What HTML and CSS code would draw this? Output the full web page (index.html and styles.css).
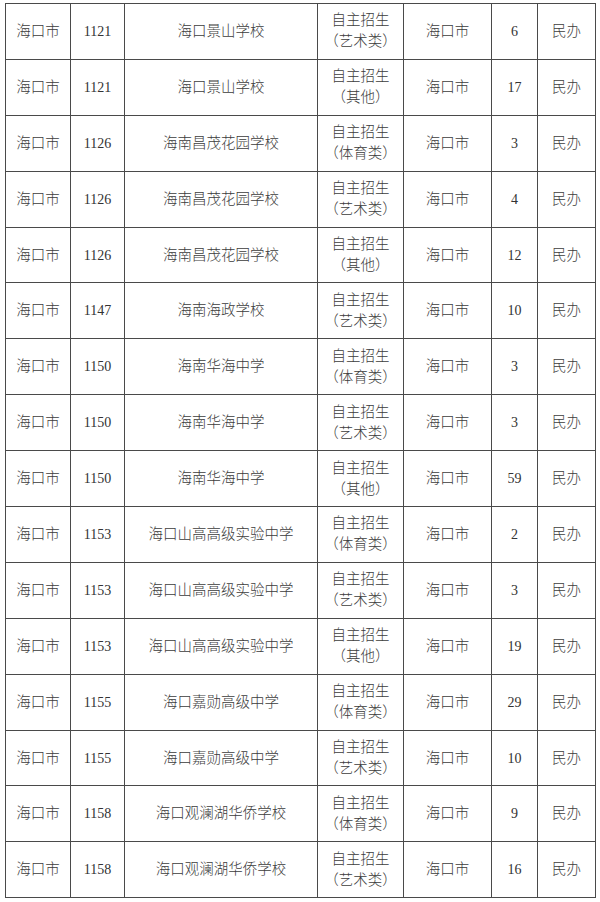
FILE: index.html
```html
<!DOCTYPE html>
<html lang="zh-CN">
<head>
<meta charset="utf-8">
<title>表格</title>
<link rel="stylesheet" href="styles.css">
</head>
<body>
<table class="tbl">
<colgroup>
<col class="c1"><col class="c2"><col class="c3"><col class="c4"><col class="c5"><col class="c6"><col class="c7">
</colgroup>
<tbody>
<tr><td>海口市</td><td class="num">1121</td><td>海口景山学校</td><td class="two">自主招生<br>（艺术类）</td><td>海口市</td><td class="num">6</td><td>民办</td></tr>
<tr><td>海口市</td><td class="num">1121</td><td>海口景山学校</td><td class="two">自主招生<br>（其他）</td><td>海口市</td><td class="num">17</td><td>民办</td></tr>
<tr><td>海口市</td><td class="num">1126</td><td>海南昌茂花园学校</td><td class="two">自主招生<br>（体育类）</td><td>海口市</td><td class="num">3</td><td>民办</td></tr>
<tr><td>海口市</td><td class="num">1126</td><td>海南昌茂花园学校</td><td class="two">自主招生<br>（艺术类）</td><td>海口市</td><td class="num">4</td><td>民办</td></tr>
<tr><td>海口市</td><td class="num">1126</td><td>海南昌茂花园学校</td><td class="two">自主招生<br>（其他）</td><td>海口市</td><td class="num">12</td><td>民办</td></tr>
<tr><td>海口市</td><td class="num">1147</td><td>海南海政学校</td><td class="two">自主招生<br>（艺术类）</td><td>海口市</td><td class="num">10</td><td>民办</td></tr>
<tr><td>海口市</td><td class="num">1150</td><td>海南华海中学</td><td class="two">自主招生<br>（体育类）</td><td>海口市</td><td class="num">3</td><td>民办</td></tr>
<tr><td>海口市</td><td class="num">1150</td><td>海南华海中学</td><td class="two">自主招生<br>（艺术类）</td><td>海口市</td><td class="num">3</td><td>民办</td></tr>
<tr><td>海口市</td><td class="num">1150</td><td>海南华海中学</td><td class="two">自主招生<br>（其他）</td><td>海口市</td><td class="num">59</td><td>民办</td></tr>
<tr><td>海口市</td><td class="num">1153</td><td>海口山高高级实验中学</td><td class="two">自主招生<br>（体育类）</td><td>海口市</td><td class="num">2</td><td>民办</td></tr>
<tr><td>海口市</td><td class="num">1153</td><td>海口山高高级实验中学</td><td class="two">自主招生<br>（艺术类）</td><td>海口市</td><td class="num">3</td><td>民办</td></tr>
<tr><td>海口市</td><td class="num">1153</td><td>海口山高高级实验中学</td><td class="two">自主招生<br>（其他）</td><td>海口市</td><td class="num">19</td><td>民办</td></tr>
<tr><td>海口市</td><td class="num">1155</td><td>海口嘉勋高级中学</td><td class="two">自主招生<br>（体育类）</td><td>海口市</td><td class="num">29</td><td>民办</td></tr>
<tr><td>海口市</td><td class="num">1155</td><td>海口嘉勋高级中学</td><td class="two">自主招生<br>（艺术类）</td><td>海口市</td><td class="num">10</td><td>民办</td></tr>
<tr><td>海口市</td><td class="num">1158</td><td>海口观澜湖华侨学校</td><td class="two">自主招生<br>（体育类）</td><td>海口市</td><td class="num">9</td><td>民办</td></tr>
<tr><td>海口市</td><td class="num">1158</td><td>海口观澜湖华侨学校</td><td class="two">自主招生<br>（艺术类）</td><td>海口市</td><td class="num">16</td><td>民办</td></tr>
</tbody>
</table>
</body>
</html>
```
FILE: styles.css
```css
html, body {
  margin: 0;
  padding: 0;
  background: #ffffff;
}
body {
  padding: 3px 0 0 5px;
}
.tbl {
  border-collapse: collapse;
  table-layout: fixed;
  width: 590px;
  font-family: "Liberation Serif", "Noto Sans CJK SC", serif;
  font-size: 14.5px;
  color: #3c3c3c;
}
.c1 { width: 65px; }
.c2 { width: 54px; }
.c3 { width: 193px; }
.c4 { width: 86px; }
.c5 { width: 88px; }
.c6 { width: 46px; }
.c7 { width: 58px; }
.tbl td {
  border: 1px solid #4a4a4a;
  height: 54.9px;
  padding: 0;
  text-align: center;
  vertical-align: middle;
  line-height: 21px;
  font-weight: 300;
}
.tbl td.num {
  font-size: 14px;
  color: #333333;
}
```
